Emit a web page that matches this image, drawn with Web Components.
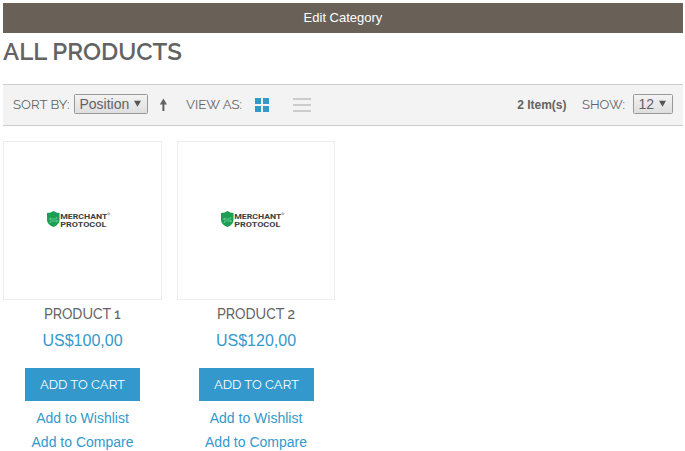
<!DOCTYPE html>
<html lang="en"><head><meta charset="utf-8"><title>All Products</title>
<style>
body{margin:0;background:#fff;color:#636363;font-family:"Liberation Sans",Arial,sans-serif;overflow:hidden}
</style></head><body>
<category-page></category-page>
<script>
const define=(name,html)=>customElements.define(name,class extends HTMLElement{
  connectedCallback(){
    if(this.shadowRoot)return;
    const t=document.createElement('template');
    t.innerHTML=typeof html==='function'?html(this):html;
    this.attachShadow({mode:'open'}).append(t.content.cloneNode(true));
  }
});
// One line of display type, fitted to a given width.
define('display-text',e=>{
  const w=+e.getAttribute('width'),s=+e.getAttribute('size'),b=Math.round(s*1.1);
  return `<style>:host{display:block;flex:none;width:${w}px;height:${Math.round(s*1.4)}px}svg{display:block;overflow:visible}
  text{font-family:Raleway,Lato,sans-serif;font-size:${s}px;font-weight:${e.getAttribute('weight')||400};fill:currentColor}</style>
  <svg width="${w}" height="${Math.round(s*1.4)}"><text x="0" y="${b}" textLength="${w}" lengthAdjust="spacingAndGlyphs">${e.getAttribute('text')}</text></svg>`});
define('edit-bar',`<style>:host{display:flex;height:30px;background:#696158;color:#fff;font-size:13px;line-height:29px;justify-content:center}</style><slot></slot>`);
define('select-box',e=>`<style>:host{display:flex;flex:none;box-sizing:border-box;width:${e.getAttribute('width')}px;height:20px;border:1px solid #999;border-radius:1.5px;background:linear-gradient(#f3f3f3,#dedede);font-size:14px;line-height:16px;padding:0 6px 0 4.5px;align-items:center;justify-content:space-between}svg{display:block}</style><slot></slot><svg width="7" height="18"><path d="M0 5.8H7L3.5 11.8Z" fill="#555"/></svg>`);
define('arrow-up',`<style>:host{display:block}svg{display:block}</style><svg width="8" height="14"><path d="M4.4 .5L8 6.5H5.4V13H3.4V6.5H.8Z" fill="#636363"/></svg>`);
define('grid-icon',`<style>:host{display:grid;grid-template-columns:6px 6px;grid-auto-rows:6px;gap:2px}i{background:#3399cc}</style><i></i><i></i><i></i><i></i>`);
define('list-icon',`<style>:host{display:grid;width:18px;grid-auto-rows:2px;gap:4px}i{background:#ccc}</style><i></i><i></i><i></i>`);
define('list-toolbar',`<style>:host{display:flex;align-items:center;box-sizing:border-box;height:42px;border:solid #ccc;border-width:1px 0;background:#f3f3f3;padding:0 10px}
display-text{margin-top:-3px}.up{margin:0 0 0 11px}.view{margin-left:19px}.grid{margin:0 0 0 13px}.list{margin:0 0 0 24px}b{font-size:12px;margin-left:auto;margin-right:.5px}.show{margin-left:15px}select-box{margin-left:5px;margin-top:-2px}.n{margin-left:8px}</style>
<display-text text="SORT BY:" width="56.5" size="12.5" style="margin-right:-.5px"></display-text><select-box width="74">Position</select-box><arrow-up class="up"></arrow-up>
<display-text class="view" text="VIEW AS:" width="56" size="12.5"></display-text><grid-icon class="grid"></grid-icon><list-icon class="list"></list-icon>
<b>2 Item(s)</b><display-text class="show" text="SHOW:" width="43" size="12.5"></display-text><select-box class="n" width="40">12</select-box>`);
define('brand-logo',`<style>:host{display:block}svg{display:block;overflow:visible}text{font-family:Roboto,sans-serif;font-weight:700;font-size:8px;fill:#38413f}</style>
<svg width="64" height="18"><path d="M6.5 0Q9 2 12.5 2V9Q12.5 13.5 6.5 16Q0 13.5 0 9V2Q4 2 6.5 0Z" fill="#1c9f55"/><path d="M2.5 8H8Q10 8 10 6M10.5 10H5Q3 10 3 12M4 7L2.5 8L4 9M9 9L10.5 10L9 11" fill="none" stroke="#73cf95" stroke-width=".8"/>
<text x="13.3" y="8" textLength="47" lengthAdjust="spacingAndGlyphs">MERCHANT</text><text x="13.3" y="16" textLength="46" lengthAdjust="spacingAndGlyphs">PROTOCOL</text><circle cx="61.8" cy="2.8" r="1" fill="none" stroke="#777" stroke-width=".6"/></svg>`);
define('cart-button',`<style>:host{display:flex;box-sizing:border-box;width:115px;height:33px;background:#3399cc;color:#fff;align-items:center;justify-content:center;padding-bottom:2px}</style><display-text text="ADD TO CART" width="85" size="12.5"></display-text>`);
define('product-card',e=>`<style>:host{display:flex;flex-direction:column;align-items:center;width:${e.getAttribute('width')}px}
.pic{box-sizing:border-box;width:100%;height:159px;border:1px solid #ededed;display:flex;padding:69px 0 0 43px}
.name{margin-top:4px;height:19px}.price{font-size:16px;line-height:20px;margin-top:8px;color:#3399cc}
cart-button{margin:17px 0 5px;align-self:flex-start;margin-left:22px}a{color:#3399cc;font-size:14px;line-height:24px}</style>
<div class="pic"><brand-logo></brand-logo></div>
<display-text class="name" text="PRODUCT ${e.getAttribute('number')}" width="${e.getAttribute('name-width')}" size="14" weight="500"></display-text>
<div class="price"><slot></slot></div><cart-button></cart-button><a>Add to Wishlist</a><a>Add to Compare</a>`);
define('category-page',`<style>:host{display:block;width:680px;margin:3px 0 0 3px}.title{padding-top:1px;height:50px}.products{display:flex;gap:15px;margin-top:15px}</style>
<edit-bar>Edit Category</edit-bar><display-text class="title" text="ALL PRODUCTS" width="179" size="24" weight="600"></display-text><list-toolbar></list-toolbar>
<div class="products"><product-card width="159" name-width="76.5" number="1">US$100,00</product-card><product-card width="158" name-width="78" number="2">US$120,00</product-card></div>`);
</script></body></html>
